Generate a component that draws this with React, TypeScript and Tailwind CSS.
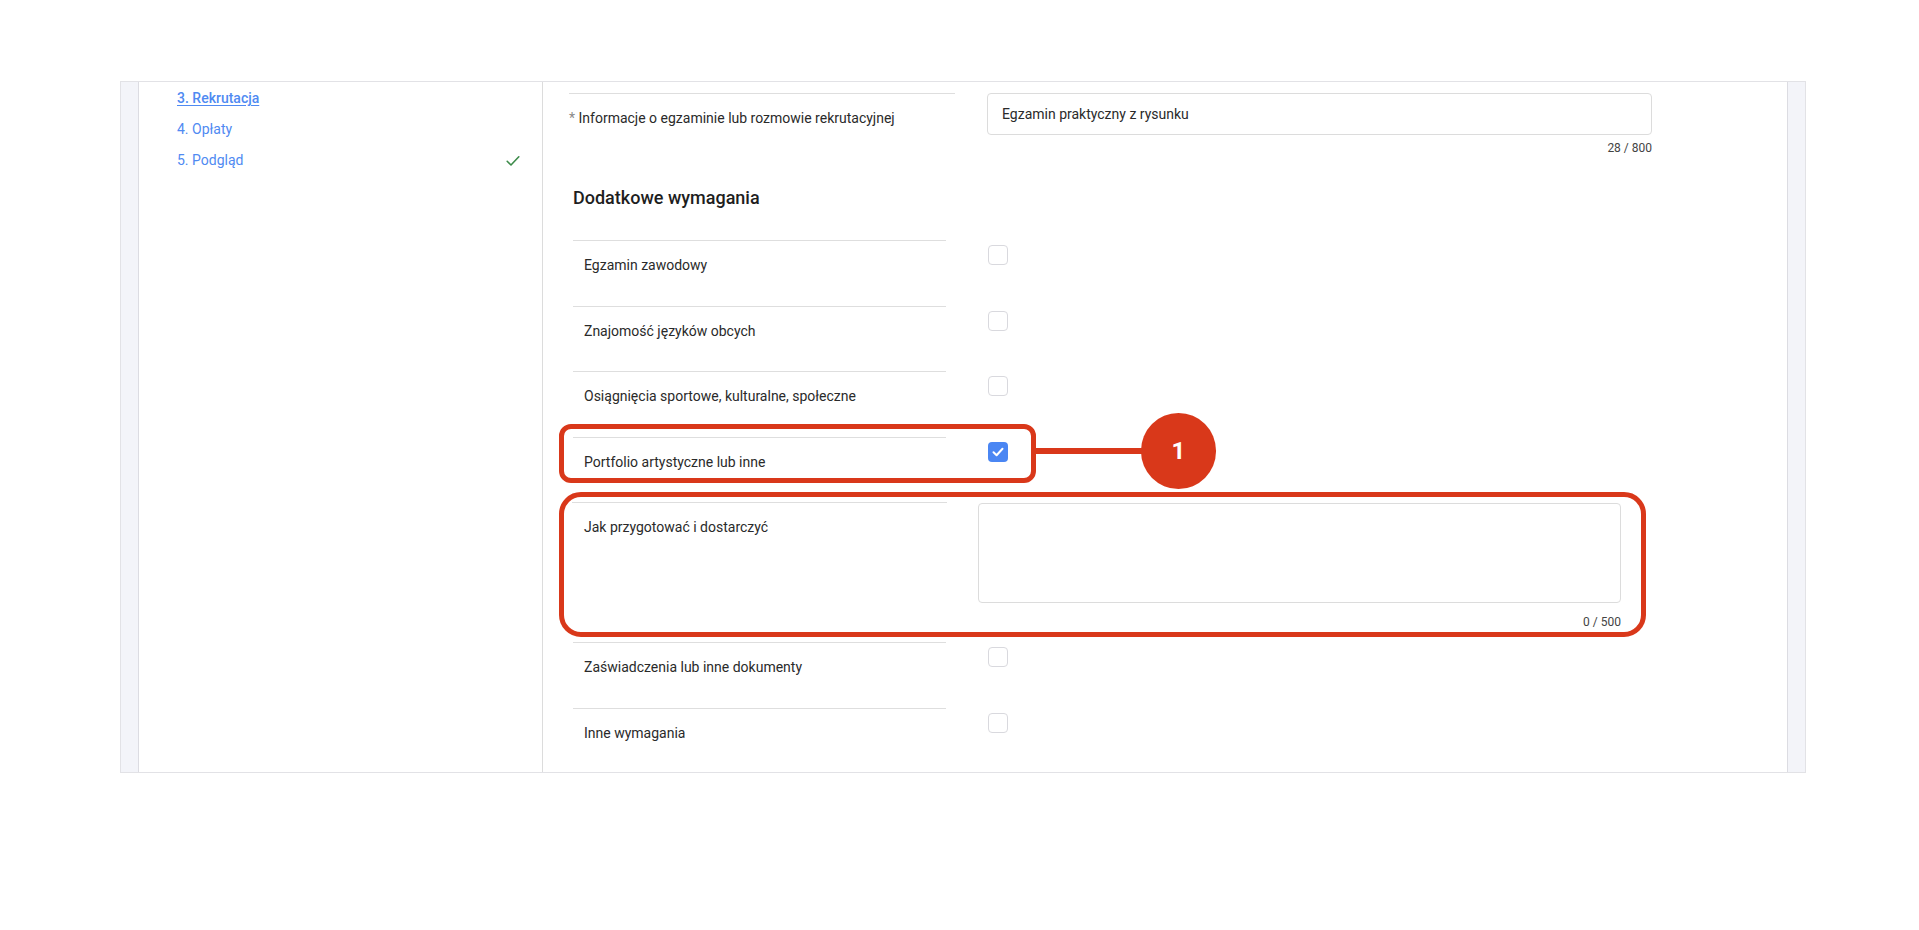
import React from "react";

const rows1 = [
  "Egzamin zawodowy",
  "Znajomość języków obcych",
  "Osiągnięcia sportowe, kulturalne, społeczne",
];

function Checkbox({ checked = false }: { checked?: boolean }) {
  if (checked) {
    return (
      <div className="w-[20px] h-[20px] rounded-[4px] bg-[#4a86f3] flex items-center justify-center">
        <svg width="14" height="14" viewBox="0 0 14 14" fill="none">
          <path d="M2.5 7.3 L5.6 10.2 L11.5 3.8" stroke="white" strokeWidth="2" strokeLinecap="round" strokeLinejoin="round" />
        </svg>
      </div>
    );
  }
  return <div className="w-[20px] h-[20px] rounded-[4px] border border-[#d9d9de] bg-white" />;
}

function CheckRow({ label, checked = false }: { label: string; checked?: boolean }) {
  return (
    <div className="flex ml-[4px] h-[65.5px]">
      <div className="w-[373px] border-t border-[#dedede] pt-[14px] pl-[11px] text-[14px] leading-5 text-[#2a2a2a]">
        {label}
      </div>
      <div className="ml-[42px] mt-[5px]">
        <Checkbox checked={checked} />
      </div>
    </div>
  );
}

export default function App() {
  return (
    <div className="relative w-[1919px] h-[930px] bg-white font-['Roboto',sans-serif]">
      <div className="pt-[81px] pl-[120px]">
        <div className="w-[1686px] h-[692px] border border-[#e2e2e6] flex overflow-hidden">
          <div className="w-[18px] bg-[#f3f4f9] border-r border-[#dcdce2]" />
          <aside className="w-[404px] border-r border-[#dcdcdc] pl-[38px] pr-[22px] pt-[1px]">
            <div className="h-[31px] flex items-center text-[14px] font-medium text-[#4f8af2] underline underline-offset-2">
              3. Rekrutacja
            </div>
            <div className="h-[31px] flex items-center text-[14px] text-[#4f8af2]">4. Opłaty</div>
            <div className="h-[31px] flex items-center justify-between text-[14px] text-[#4f8af2]">
              <span>5. Podgląd</span>
              <svg width="14" height="12" viewBox="0 0 14 12" fill="none">
                <path d="M1.2 6.3 L5 10 L12.8 1.8" stroke="#3d8b4a" strokeWidth="1.6" strokeLinecap="round" strokeLinejoin="round" />
              </svg>
            </div>
          </aside>
          <main className="flex-1 pl-[26px] pt-[11px]">
            {/* info row */}
            <div className="flex">
              <div className="w-[386px] border-t border-[#dedede] pt-[14px] text-[14px] leading-5 text-[#2a2a2a]">
                <span className="text-[#8a8a8a]">* </span>Informacje o egzaminie lub rozmowie rekrutacyjnej
              </div>
              <div className="ml-[32px] w-[665px]">
                <div className="h-[42px] border border-[#dcdcdc] rounded-[4px] flex items-center pl-[14px] text-[14px] text-[#2a2a2a]">
                  Egzamin praktyczny z rysunku
                </div>
                <div className="mt-[5px] text-right text-[12px] leading-4 text-[#444]">28 / 800</div>
              </div>
            </div>

            <h2 className="mt-[28px] ml-[4px] text-[18px] leading-7 font-medium text-[#1e1e1e]">
              Dodatkowe wymagania
            </h2>

            <div className="mt-[28px]">
              {rows1.map((r) => (
                <CheckRow key={r} label={r} />
              ))}
              <CheckRow label="Portfolio artystyczne lub inne" checked />

              <div className="flex ml-[3px] h-[140px]">
                <div className="w-[375px] border-t border-[#dedede] pt-[14px] pl-[12px] text-[14px] leading-5 text-[#2a2a2a]">
                  Jak przygotować i dostarczyć
                </div>
                <div className="ml-[31px] w-[643px] pt-[1px]">
                  <div className="h-[100px] border border-[#dcdcdc] rounded-[4px]" />
                  <div className="mt-[11px] text-right text-[12px] leading-4 text-[#444]">0 / 500</div>
                </div>
              </div>

              <CheckRow label="Zaświadczenia lub inne dokumenty" />
              <CheckRow label="Inne wymagania" />
            </div>
          </main>
          <div className="w-[18px] bg-[#f3f4f9] border-l border-[#dcdce2]" />
        </div>
      </div>

      {/* annotations */}
      <div className="absolute left-[559px] top-[424px] w-[477px] h-[59px] border-[5px] border-[#d9381a] rounded-[12px]" />
      <div className="absolute left-[1036px] top-[448px] w-[110px] h-[6px] bg-[#d9381a]" />
      <div className="absolute left-[1141px] top-[413px] w-[75px] h-[76px] rounded-full bg-[#d9381a] flex items-center justify-center text-white text-[24px] font-bold">
        1
      </div>
      <div className="absolute left-[559px] top-[492px] w-[1087px] h-[145px] border-[5px] border-[#d9381a] rounded-[22px]" />
    </div>
  );
}
